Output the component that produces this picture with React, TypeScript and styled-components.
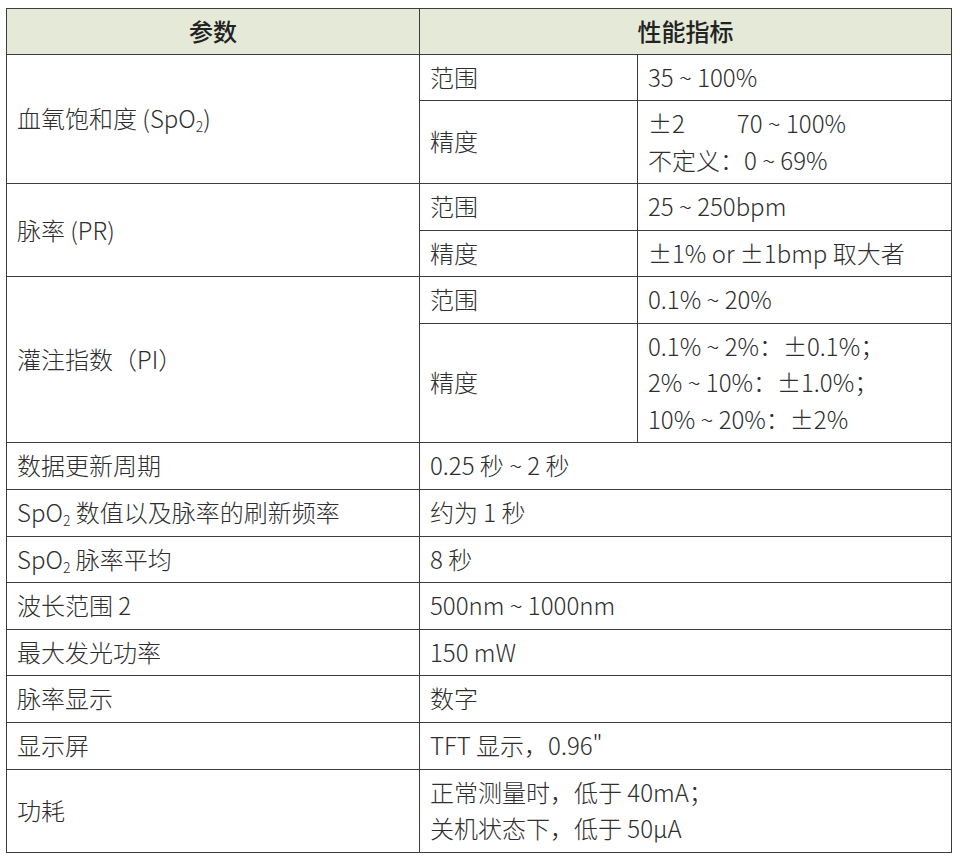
import React from 'react'
import styled, { createGlobalStyle } from 'styled-components'

const GlobalStyle = createGlobalStyle`
  html, body {
    margin: 0;
    padding: 0;
    background: #ffffff;
  }
  body {
    font-family: 'Noto Sans CJK SC', 'Noto Sans', sans-serif;
    color: #2e2e2e;
  }
`

const Page = styled.div`
  padding: 8px 0 0 6px;
`

const Table = styled.table`
  width: 945px;
  table-layout: fixed;
  border-collapse: collapse;
  font-size: 24px;
  line-height: 36.4px;
`

const HeadCell = styled.th`
  background: #e4e9d8;
  border: 1px solid #3c3c3c;
  font-weight: 500;
  color: #222222;
  text-align: center;
  padding: 3.6px 10px 4.6px;
`

const Cell = styled.td`
  border: 1px solid #3c3c3c;
  padding: 4.1px 10px 5.1px 10px;
  vertical-align: middle;
  font-weight: 300;
  text-align: left;
`

const Sub = styled.sub`
  font-size: 14px;
  vertical-align: -4px;
  line-height: 0;
`

const Gap = styled.span<{ $w: number }>`
  display: inline-block;
  width: ${(p) => p.$w}px;
`

const Line = styled.div``

const SpO2 = () => (
  <>
    SpO<Sub>2</Sub>
  </>
)

interface SimpleRow {
  label: React.ReactNode
  value: React.ReactNode
}

const simpleRows: SimpleRow[] = [
  { label: '数据更新周期', value: '0.25 秒 ~ 2 秒' },
  { label: <><SpO2 /> 数值以及脉率的刷新频率</>, value: '约为 1 秒' },
  { label: <><SpO2 /> 脉率平均</>, value: '8 秒' },
  { label: '波长范围 2', value: '500nm ~ 1000nm' },
  { label: '最大发光功率', value: '150 mW' },
  { label: '脉率显示', value: '数字' },
  { label: '显示屏', value: 'TFT 显示，0.96"' },
]

export default function App() {
  return (
    <Page lang="zh-CN">
      <GlobalStyle />
      <Table>
        <colgroup>
          <col style={{ width: 413 }} />
          <col style={{ width: 218 }} />
          <col style={{ width: 314 }} />
        </colgroup>
        <thead>
          <tr>
            <HeadCell>参数</HeadCell>
            <HeadCell colSpan={2}>性能指标</HeadCell>
          </tr>
        </thead>
        <tbody>
          <tr>
            <Cell rowSpan={2}>
              血氧饱和度 (<SpO2 />)
            </Cell>
            <Cell>范围</Cell>
            <Cell>35 ~ 100%</Cell>
          </tr>
          <tr>
            <Cell>精度</Cell>
            <Cell>
              <Line>
                ±2<Gap $w={52} />70 ~ 100%
              </Line>
              <Line>不定义：0 ~ 69%</Line>
            </Cell>
          </tr>
          <tr>
            <Cell rowSpan={2}>脉率 (PR)</Cell>
            <Cell>范围</Cell>
            <Cell>25 ~ 250bpm</Cell>
          </tr>
          <tr>
            <Cell>精度</Cell>
            <Cell>±1% or ±1bmp 取大者</Cell>
          </tr>
          <tr>
            <Cell rowSpan={2}>灌注指数（PI）</Cell>
            <Cell>范围</Cell>
            <Cell>0.1% ~ 20%</Cell>
          </tr>
          <tr>
            <Cell>精度</Cell>
            <Cell>
              <Line>0.1% ~ 2%：±0.1%；</Line>
              <Line>2% ~ 10%：±1.0%；</Line>
              <Line>10% ~ 20%：±2%</Line>
            </Cell>
          </tr>
          {simpleRows.map((row, i) => (
            <tr key={i}>
              <Cell>{row.label}</Cell>
              <Cell colSpan={2}>{row.value}</Cell>
            </tr>
          ))}
          <tr>
            <Cell>功耗</Cell>
            <Cell colSpan={2}>
              <Line>正常测量时，低于 40mA；</Line>
              <Line>关机状态下，低于 50μA</Line>
            </Cell>
          </tr>
        </tbody>
      </Table>
    </Page>
  )
}
